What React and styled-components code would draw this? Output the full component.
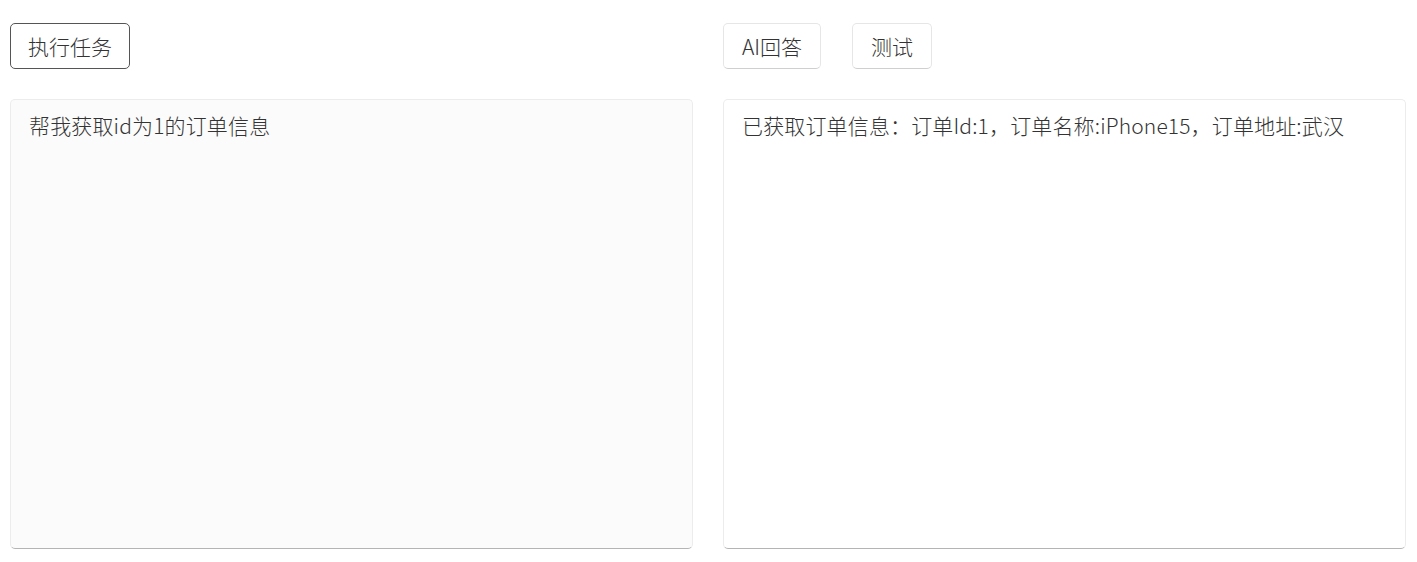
import React, { useState } from "react";
import styled, { createGlobalStyle } from "styled-components";

const GlobalStyle = createGlobalStyle`
  body {
    margin: 0;
    background: #fff;
    font-family: "Noto Sans CJK SC", "Noto Sans", sans-serif;
    color: #333;
  }
`;

const Page = styled.div`
  display: grid;
  grid-template-columns: 683px 683px;
  column-gap: 30px;
  padding: 23px 10px 0 10px;
`;

const Column = styled.div`
  display: flex;
  flex-direction: column;
  gap: 30px;
`;

const Toolbar = styled.div`
  display: flex;
  gap: 31px;
  height: 46px;
`;

const Button = styled.button`
  height: 46px;
  padding: 0 ${(p) => (p.$primary ? "17px" : "18px")} 1px;
  font-family: inherit;
  font-size: 21px;
  font-weight: 300;
  color: #333;
  background: #fff;
  border-radius: 5px;
  cursor: pointer;
  border: 1px solid ${(p) => (p.$primary ? "#555" : "#e6e6e6")};
  border-bottom-color: ${(p) => (p.$primary ? "#555" : "#cfcfcf")};
`;

const Panel = styled.textarea`
  box-sizing: border-box;
  width: 683px;
  height: 450px;
  margin: 0;
  padding: 11px 18px;
  resize: none;
  font-family: inherit;
  font-size: 21px;
  font-weight: 300;
  line-height: 28px;
  letter-spacing: 0.15px;
  color: #333;
  background: ${(p) => (p.$muted ? "#fbfbfb" : "#fff")};
  border: 1px solid #ececec;
  border-bottom-color: #b4b4b4;
  border-radius: 5px;
  outline: none;
`;

const App = () => {
  const [question, setQuestion] = useState("帮我获取id为1的订单信息");
  const answer =
    "已获取订单信息：订单Id:1，订单名称:iPhone15，订单地址:武汉";

  return (
    <>
      <GlobalStyle />
      <Page>
        <Column>
          <Toolbar>
            <Button $primary>执行任务</Button>
          </Toolbar>
          <Panel
            $muted
            value={question}
            onChange={(e) => setQuestion(e.target.value)}
          />
        </Column>
        <Column>
          <Toolbar>
            <Button>AI回答</Button>
            <Button>测试</Button>
          </Toolbar>
          <Panel value={answer} readOnly />
        </Column>
      </Page>
    </>
  );
};

export default App;
